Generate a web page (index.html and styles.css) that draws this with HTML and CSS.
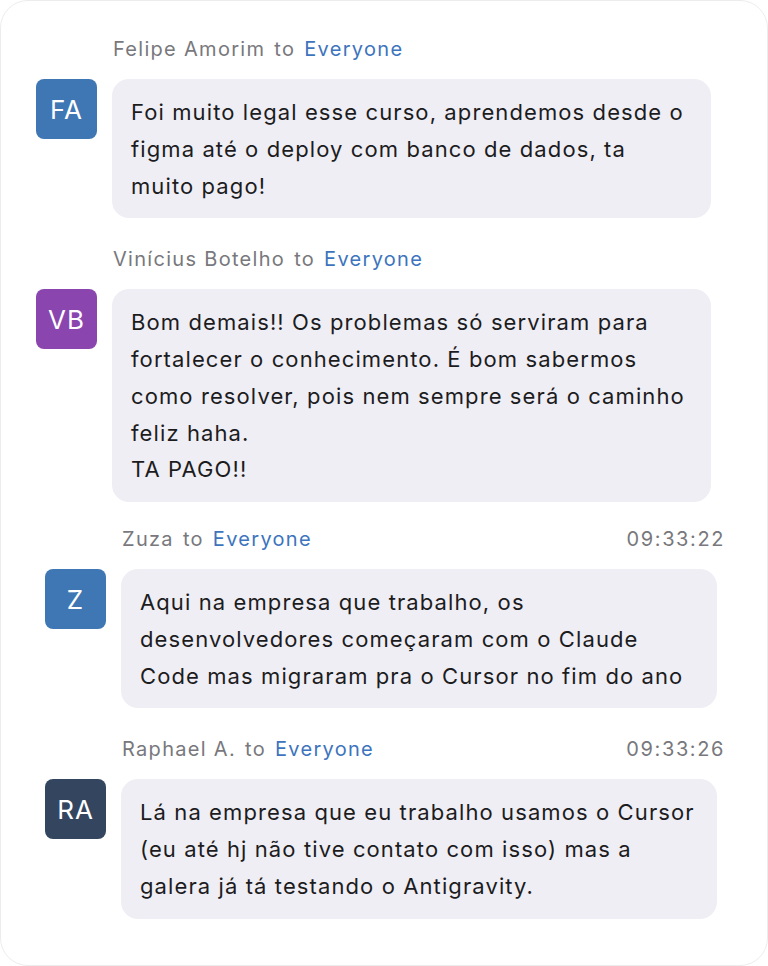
FILE: index.html
```html
<!DOCTYPE html>
<html lang="pt-BR">
<head>
    <meta charset="UTF-8">
    <title>Chat - Everyone</title>
    <link rel="stylesheet" href="styles.css">
</head>
<body>
    <div class="chat">
        <div class="group">
            <div class="msg">
                <div class="meta">
                    <span class="from">Felipe Amorim</span> <span class="from">to</span> <span class="to">Everyone</span>
                </div>
                <div class="avatar blue">FA</div>
                <div class="bubble">Foi muito legal esse curso, aprendemos desde o figma até o deploy com banco de dados, ta muito pago!</div>
            </div>

            <div class="msg">
                <div class="meta">
                    <span class="from">Vinícius Botelho</span> <span class="from">to</span> <span class="to">Everyone</span>
                </div>
                <div class="avatar purple">VB</div>
                <div class="bubble">Bom demais!! Os problemas só serviram para fortalecer o conhecimento. É bom sabermos como resolver, pois nem sempre será o caminho feliz haha.<br>TA PAGO!!</div>
            </div>
        </div>

        <div class="group shifted">
            <div class="msg">
                <div class="meta">
                    <span class="from">Zuza</span> <span class="from">to</span> <span class="to">Everyone</span>
                    <span class="time">09:33:22</span>
                </div>
                <div class="avatar blue">Z</div>
                <div class="bubble">Aqui na empresa que trabalho, os desenvolvedores começaram com o Claude Code mas migraram pra o Cursor no fim do ano</div>
            </div>

            <div class="msg">
                <div class="meta">
                    <span class="from">Raphael A.</span> <span class="from">to</span> <span class="to">Everyone</span>
                    <span class="time">09:33:26</span>
                </div>
                <div class="avatar slate">RA</div>
                <div class="bubble">Lá na empresa que eu trabalho usamos o Cursor (eu até hj não tive contato com isso) mas a galera já tá testando o Antigravity.</div>
            </div>
        </div>
    </div>
</body>
</html>
```

FILE: styles.css
```css
html, body {
    margin: 0;
    padding: 0;
    background-color: #ffffff;
}
body {
    font-family: 'Inter', 'Noto Sans', sans-serif;
    color: #1c1c1e;
}
.chat {
    box-sizing: border-box;
    height: 966px;
    border: 1px solid #ececec;
    border-radius: 28px;
    padding: 36px 0 0 35px;
    overflow: hidden;
}
.group {
    width: 675px;
}
.group.shifted {
    width: 679px;
    margin-left: 9px;
    margin-top: -4px;
}
.msg {
    display: grid;
    grid-template-columns: 61px 1fr;
    column-gap: 15px;
    margin-bottom: 29px;
}
.meta {
    grid-column: 2;
    display: flex;
    align-items: baseline;
    gap: 9px;
    font-size: 20px;
    line-height: 24px;
    letter-spacing: 1.3px;
    margin-bottom: 18px;
    margin-left: 1px;
}
.from {
    color: #78787d;
}
.to {
    color: #3d74bd;
}
.time {
    margin-left: auto;
    color: #78787d;
    letter-spacing: 1.6px;
    margin-right: -1px;
}
.avatar {
    width: 61px;
    height: 60px;
    border-radius: 8px;
    color: #ffffff;
    font-size: 26px;
    letter-spacing: 1px;
    display: flex;
    align-items: center;
    justify-content: center;
}
.blue {
    background-color: #3e77b4;
}
.purple {
    background-color: #8a45ae;
}
.slate {
    background-color: #34465f;
}
.bubble {
    background-color: #efeef4;
    border-radius: 17px;
    padding: 15px 19px 14px;
    font-size: 22px;
    line-height: 36.75px;
    letter-spacing: 1.1px;
}
.shifted .bubble {
    margin-right: 7px;
}
```
